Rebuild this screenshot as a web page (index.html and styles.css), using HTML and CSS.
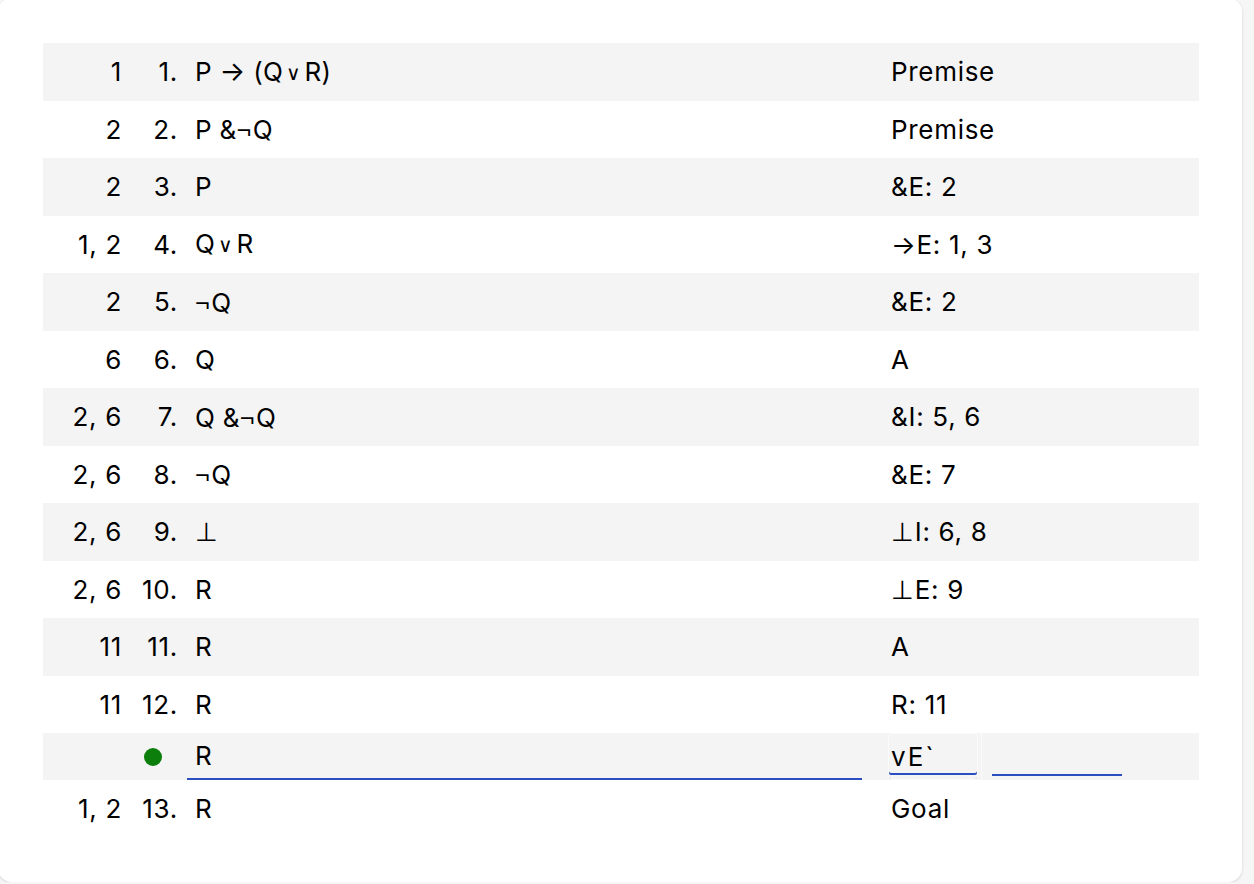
FILE: index.html
```html
<!DOCTYPE html>
<html lang="en">
<head>
<meta charset="utf-8">
<title>Proof</title>
<link rel="stylesheet" href="styles.css">
</head>
<body>
<div class="card">
  <div class="proof">
    <div class="row"><div class="deps">1</div><div class="num">1.</div><div class="formula">P <span class="arrow">→</span> (Q<span class="op">∨</span>R)</div><div class="just">Premise</div></div>
    <div class="row"><div class="deps">2</div><div class="num">2.</div><div class="formula">P &amp;<span class="neg">¬</span>Q</div><div class="just">Premise</div></div>
    <div class="row"><div class="deps">2</div><div class="num">3.</div><div class="formula">P</div><div class="just">&amp;E: 2</div></div>
    <div class="row"><div class="deps">1, 2</div><div class="num">4.</div><div class="formula">Q<span class="op">∨</span>R</div><div class="just">→E: 1, 3</div></div>
    <div class="row"><div class="deps">2</div><div class="num">5.</div><div class="formula"><span class="neg">¬</span>Q</div><div class="just">&amp;E: 2</div></div>
    <div class="row"><div class="deps">6</div><div class="num">6.</div><div class="formula">Q</div><div class="just">A</div></div>
    <div class="row"><div class="deps">2, 6</div><div class="num">7.</div><div class="formula">Q &amp;<span class="neg">¬</span>Q</div><div class="just">&amp;I: 5, 6</div></div>
    <div class="row"><div class="deps">2, 6</div><div class="num">8.</div><div class="formula"><span class="neg">¬</span>Q</div><div class="just">&amp;E: 7</div></div>
    <div class="row"><div class="deps">2, 6</div><div class="num">9.</div><div class="formula">⊥</div><div class="just">⊥I: 6, 8</div></div>
    <div class="row"><div class="deps">2, 6</div><div class="num">10.</div><div class="formula">R</div><div class="just">⊥E: 9</div></div>
    <div class="row"><div class="deps">11</div><div class="num">11.</div><div class="formula">R</div><div class="just">A</div></div>
    <div class="row"><div class="deps">11</div><div class="num">12.</div><div class="formula">R</div><div class="just">R: 11</div></div>
    <div class="row input-row">
      <div class="deps"></div>
      <div class="num"><span class="dot"></span></div>
      <div class="formula-input"><span class="field wide">R</span></div>
      <div class="just-inputs"><span class="field rule">vE`</span><span class="field lines"></span></div>
    </div>
    <div class="row"><div class="deps">1, 2</div><div class="num">13.</div><div class="formula">R</div><div class="just">Goal</div></div>
  </div>
</div>
</body>
</html>
```

FILE: styles.css
```css
html, body {
  margin: 0;
  padding: 0;
  background: #f6f6f6;
}
body {
  font-family: Inter, "Noto Sans", "Liberation Sans", sans-serif;
  font-size: 26px;
  letter-spacing: 0.7px;
  color: #000;
  overflow: hidden;
}
.card {
  width: 1244px;
  height: 884px;
  margin: -2px 0 0 -2px;
  background: #fff;
  border-radius: 14px;
  box-shadow: 0 1px 3px rgba(0, 0, 0, 0.14);
  box-sizing: border-box;
  padding: 45px 43px 43px 45px;
}
.proof {
  display: flex;
  flex-direction: column;
}
.row {
  display: grid;
  grid-template-columns: 88px 56px 701px 1fr;
  align-items: center;
  height: 57.5px;
  line-height: 30px;
}
.row > div {
  padding-top: 1px;
}
.row:nth-child(odd) {
  background: #f4f4f4;
}
.deps {
  text-align: right;
  padding-right: 9px;
}
.num {
  text-align: right;
  padding-right: 9px;
  display: flex;
  justify-content: flex-end;
  align-items: center;
}
.formula {
  padding-left: 8px;
  letter-spacing: 0.3px;
}
.arrow {
  font-family: "Noto Sans", Inter, sans-serif;
  font-size: 27px;
}
.op {
  font-size: 20px;
  margin: 0 3px 0 3px;
  position: relative;
  top: -1px;
}
.neg {
  font-family: "Noto Sans", Inter, sans-serif;
  margin-right: 1px;
}
.just {
  padding-left: 3px;
}
.input-row {
  height: 47px;
  align-items: stretch;
}
.input-row > div {
  padding-top: 0;
}
.dot {
  width: 18px;
  height: 18px;
  border-radius: 50%;
  background: #0b7e0b;
  margin-right: 16px;
}
.formula-input {
  display: flex;
}
.field {
  display: flex;
  align-items: center;
  box-sizing: border-box;
}
.field.wide {
  width: 675px;
  padding-left: 8px;
  border-bottom: 2px solid #2b4fc2;
}
.just-inputs {
  display: flex;
  gap: 3px;
}
.field.rule {
  width: 90px;
  padding: 0 0 0 2px;
  border: 1px solid #fafafa;
  border-radius: 3px;
  box-shadow: inset 0 -4px 0 #f4f4f4, inset 0 -6px 0 #2b4fc2;
  letter-spacing: 2px;
}
.field.lines {
  width: 150px;
  border-left: 1.5px solid #fbfbfb;
  box-shadow: inset 10px -4px 0 #f4f4f4, inset -9px -4px 0 #f4f4f4, inset 0 -6px 0 #2b4fc2;
}
```
